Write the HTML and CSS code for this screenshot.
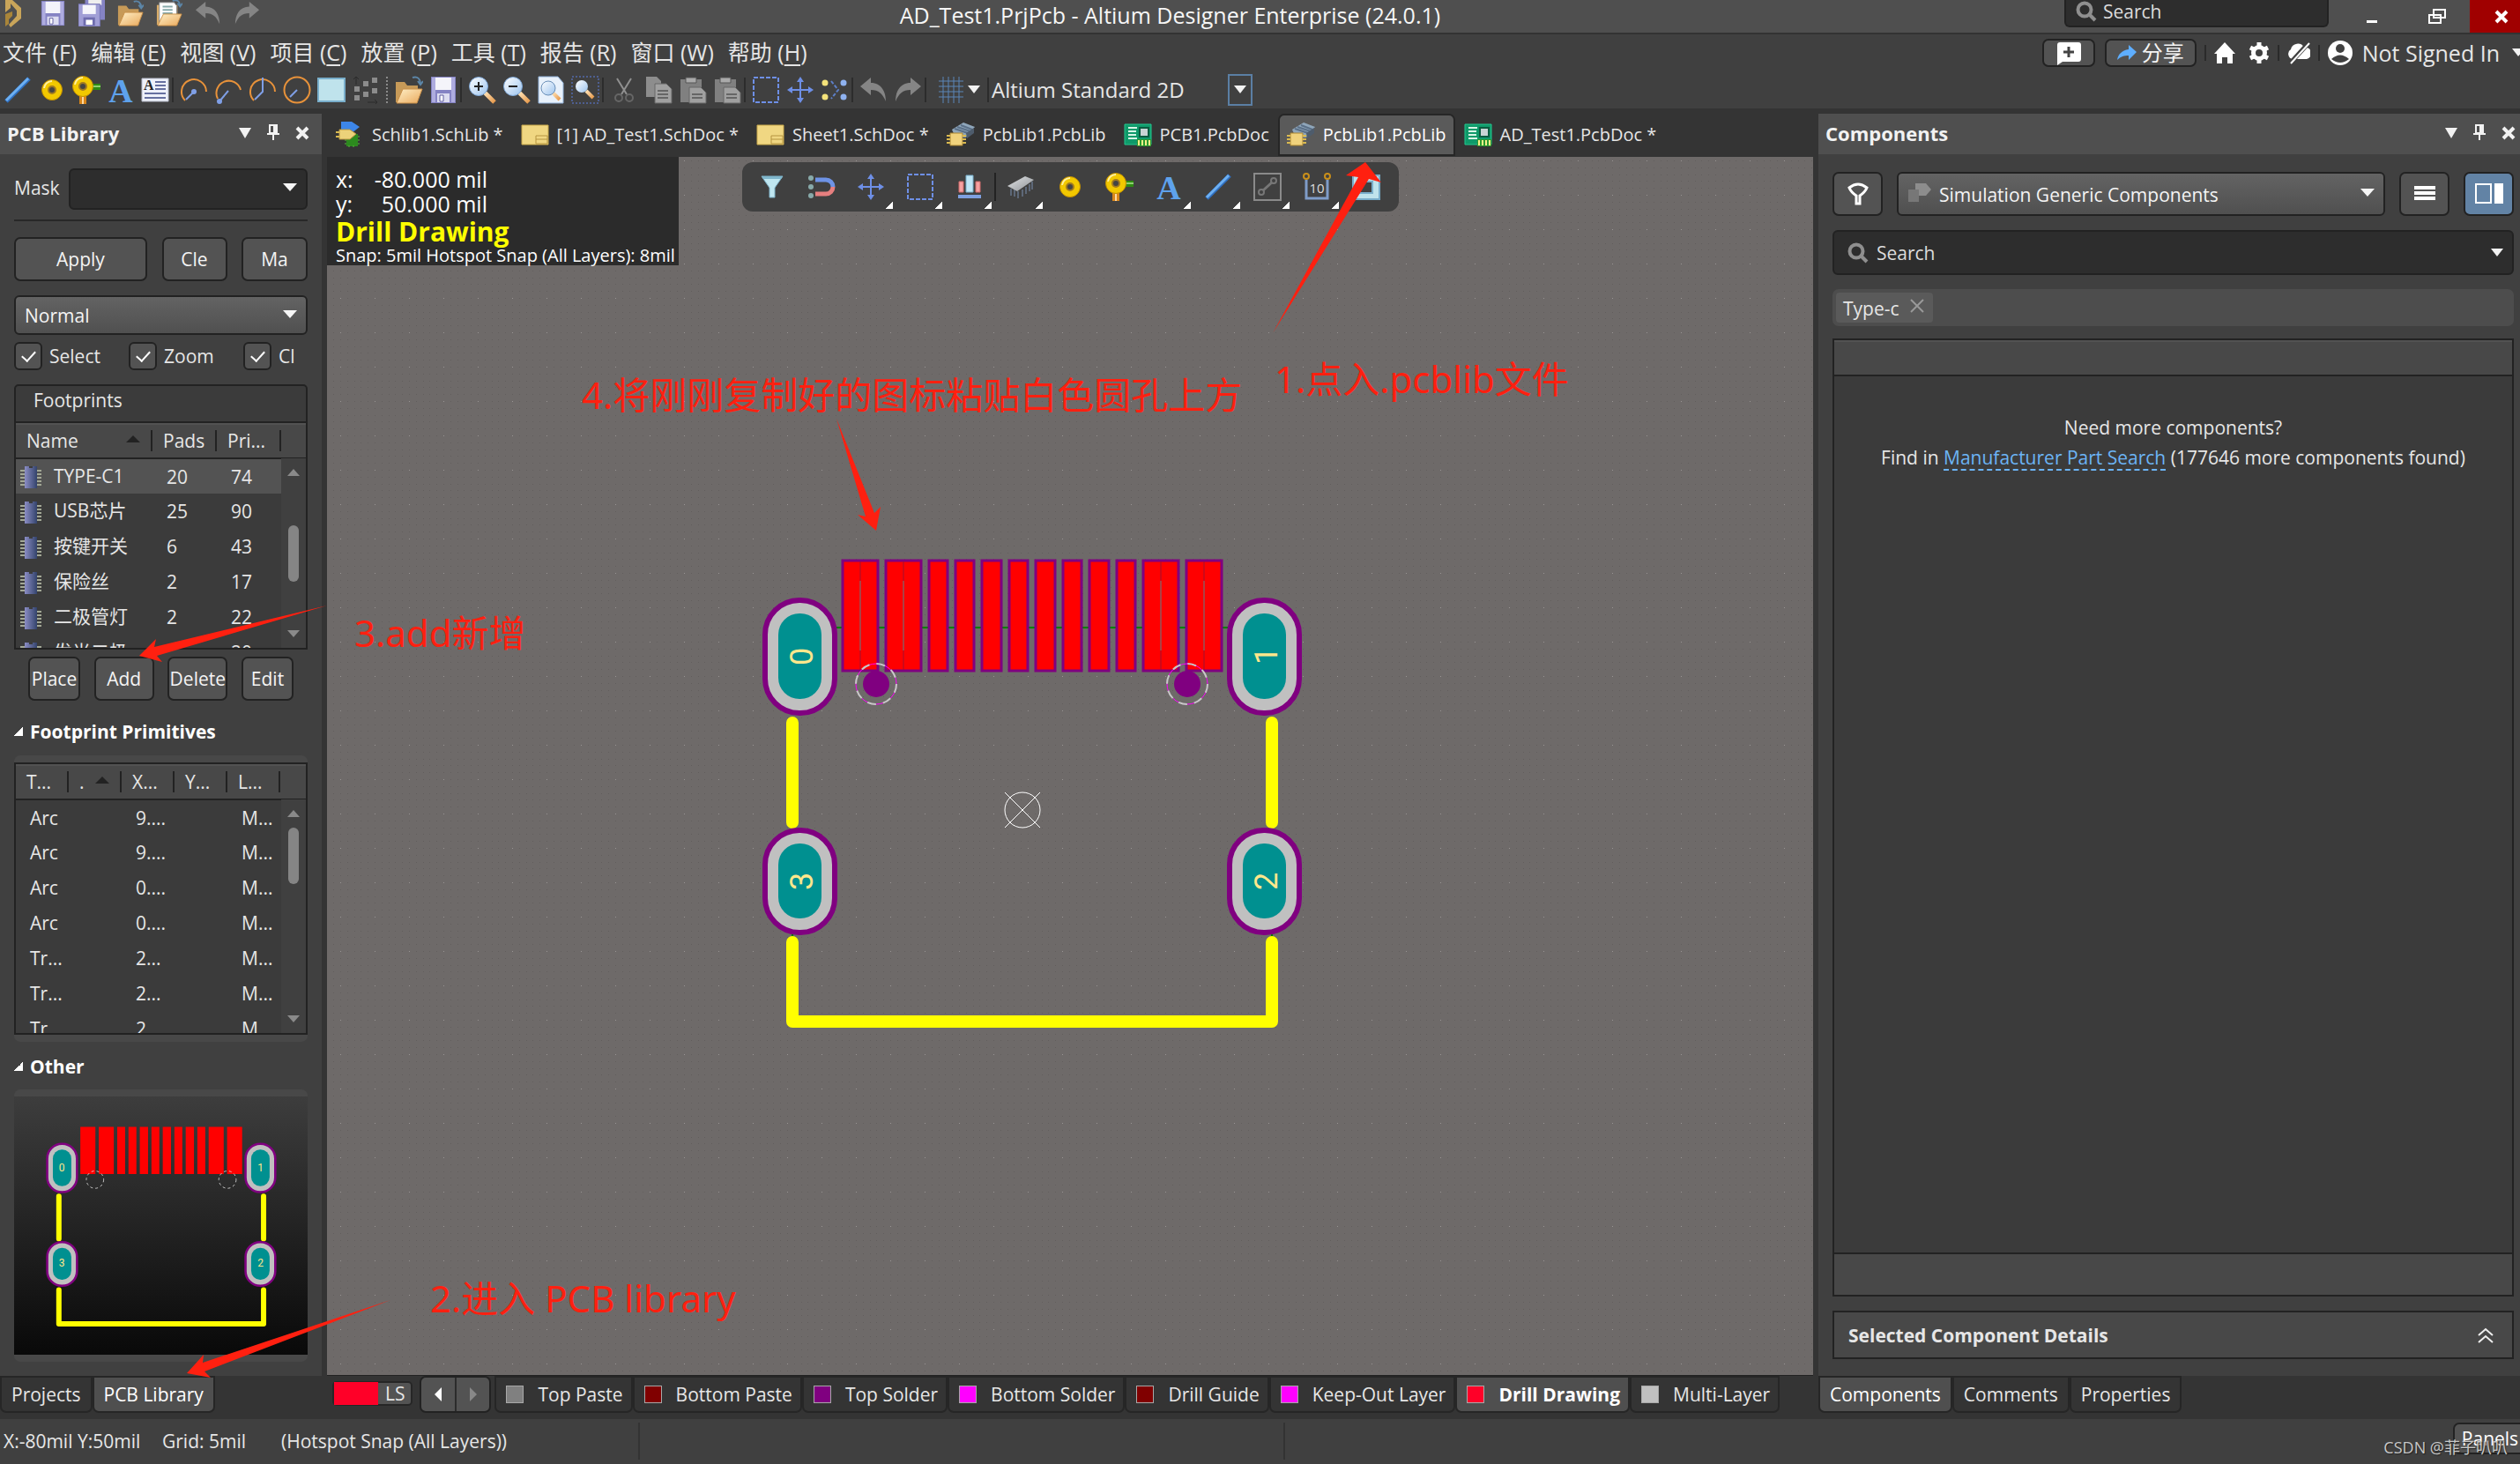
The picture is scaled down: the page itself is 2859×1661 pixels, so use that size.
FILE: index.html
```html
<!DOCTYPE html>
<html lang="zh-CN">
<head>
<meta charset="utf-8">
<title>AD_Test1.PrjPcb - Altium Designer Enterprise (24.0.1)</title>
<link rel="stylesheet" href="styles.css">
</head>
<body>
<svg class="defs" aria-hidden="true">
  <defs>
    <linearGradient id="g-handle" x1="0" y1="0" x2="1" y2="1"><stop offset="0" stop-color="#ffe3b8"/><stop offset="1" stop-color="#e79a4c"/></linearGradient>
    <linearGradient id="g-folder" x1="0" y1="0" x2="1" y2="1"><stop offset="0" stop-color="#fff0c8"/><stop offset="1" stop-color="#e9a95c"/></linearGradient>
    <linearGradient id="g-lens" x1="0" y1="0" x2="1" y2="1"><stop offset="0" stop-color="#fff"/><stop offset="1" stop-color="#9cc4ee"/></linearGradient>
    <linearGradient id="g-chip" x1="0" y1="0" x2="1" y2="0"><stop offset="0" stop-color="#8b8dc4"/><stop offset="1" stop-color="#33436c"/></linearGradient>
    <linearGradient id="g-metal" x1="0" y1="0" x2="1" y2="1"><stop offset="0" stop-color="#e4e6e8"/><stop offset="1" stop-color="#8b8f94"/></linearGradient>
    <linearGradient id="g-preview" x1="0" y1="0" x2="0" y2="1"><stop offset="0" stop-color="#3d3d3d"/><stop offset="1" stop-color="#090909"/></linearGradient>
    <pattern id="dots" width="39" height="39" patternUnits="userSpaceOnUse" patternTransform="translate(386 416)">
      <g fill="#625e5d"><path d="M0 0h1v1H0zM8 0h1v1H8zM16 0h1v1h-1zM23 0h1v1h-1zM31 0h1v1h-1zM0 8h1v1H0zM8 8h1v1H8zM16 8h1v1h-1zM23 8h1v1h-1zM31 8h1v1h-1zM0 16h1v1H0zM8 16h1v1H8zM16 16h1v1h-1zM23 16h1v1h-1zM31 16h1v1h-1zM0 23h1v1H0zM8 23h1v1H8zM16 23h1v1h-1zM23 23h1v1h-1zM31 23h1v1h-1zM0 31h1v1H0zM8 31h1v1H8zM16 31h1v1h-1zM23 31h1v1h-1zM31 31h1v1h-1z"/></g>
      <path d="M0 0h1v1H0z" fill="#989493"/>
    </pattern>

    <symbol id="i-logo" viewBox="0 0 32 32"><path d="M6 0h8l10 9v12L12 31l-2-3 9-10v-6l-7-8v5l-6 5z" fill="#c9a55a"/><path d="M6 16l8-3v5l-4 4v5l-4 3z" fill="#a98539"/></symbol>
    <symbol id="i-save" viewBox="0 0 32 32"><path d="M2 1h28v30H2z" fill="#8583c4"/><path d="M3 2h4v28H3zM25 2h4v28h-4z" fill="#aeacdf"/><path d="M7 2h18v14H7z" fill="#f4f4fa"/><path d="M9 20h14v10H9z" fill="#dcdcf0"/><path d="M12 22h4v7h-4z" fill="#fff" stroke="#5f5da0"/></symbol>
    <symbol id="i-saveall" viewBox="0 0 32 32"><path d="M8-3h24v27H8z" fill="#8583c4"/><path d="M12-3h16v9H12z" fill="#eee"/><path d="M0 5h26v27H0z" fill="#a19fd6" stroke="#7472b4"/><path d="M5 6h16v11H5z" fill="#f6f6fb"/><path d="M6 21h14v10H6z" fill="#6e6cae"/><path d="M9 24h8v6H9z" fill="#fff"/></symbol>
    <symbol id="i-open" viewBox="0 0 32 32"><path d="M1 7h10l3 4h12v19H1z" fill="#c79a58"/><path d="M9 15h22l-6 16H2z" fill="url(#g-folder)" stroke="#c98f48"/><path d="M20 2c6-2 9 2 9 7m-3-3l3 4 3-4" fill="none" stroke="#5c86a8" stroke-width="2"/></symbol>
    <symbol id="i-openprj" viewBox="0 0 32 32"><path d="M1 6h25v24H1z" fill="#d9ac6a"/><path d="M4 3h18l3 4v20H4z" fill="#fff" stroke="#888"/><path d="M8 8h12M8 12h12M8 16h12" stroke="#8aa" stroke-width="2"/><path d="M9 17h22l-6 14H2z" fill="url(#g-folder)" stroke="#c98f48"/><path d="M20 1c7-2 9 2 9 6m-3-3l3 4 3-4" fill="none" stroke="#5c86a8" stroke-width="2"/></symbol>
    <symbol id="i-undo" viewBox="0 0 32 32"><path d="M1 12L13 2v6c12 0 17 10 17 21-4-9-8-13-17-13v6z" fill="#858585"/></symbol>
    <symbol id="i-redo" viewBox="0 0 32 32"><path d="M31 12L19 2v6C7 8 2 18 2 29c4-9 8-13 17-13v6z" fill="#858585"/></symbol>
    <symbol id="i-line" viewBox="0 0 32 32"><path d="M3 29L29 3" stroke="#2f6fc0" stroke-width="5"/><path d="M3 28L28 3" stroke="#6db0f2" stroke-width="3"/></symbol>
    <symbol id="i-pad" viewBox="0 0 32 32"><circle cx="16" cy="16" r="11.500" fill="#f2c800" stroke="#c28f00"/><path d="M7 14a9 9 0 0 1 9-8" fill="none" stroke="#fff0a0" stroke-width="2"/><circle cx="16" cy="16" r="4" fill="#444" stroke="#a07a20" stroke-width="2"/></symbol>
    <symbol id="i-via" viewBox="0 0 32 32"><path d="M20 9h12v7H20z" fill="#2f8a14"/><path d="M20 11h12v2H20z" fill="#8ed070"/><path d="M8 18h8v14H8z" fill="#d9861a"/><path d="M11 18h2v14h-2z" fill="#ffd9a0"/><circle cx="12" cy="12" r="11.500" fill="#f2c800" stroke="#c28f00"/><path d="M3 10a9 9 0 0 1 9-8" fill="none" stroke="#fff0a0" stroke-width="2"/><circle cx="12" cy="12" r="4" fill="#444" stroke="#a07a20" stroke-width="2"/></symbol>
    <symbol id="i-text" viewBox="0 0 32 32"><text x="16" y="30" text-anchor="middle" class="glyph-a">A</text></symbol>
    <symbol id="i-frame" viewBox="0 0 32 32"><path d="M1 3h30v26H1z" fill="#eef1fa" stroke="#b8bccb"/><text x="3" y="16" class="glyph-a-small">A</text><path d="M16 7h12M16 11h12M16 15h12M4 20h24M4 25h24" stroke="#6670a0" stroke-width="2"/></symbol>
    <symbol id="i-arc1" viewBox="0 0 32 32"><path d="M6 28A14 14 0 1 1 30 18" fill="none" stroke="#e8923a" stroke-width="2"/><path d="M7 27L16 18" stroke="#7f9fe6" stroke-width="2"/><circle cx="16" cy="18" r="3" fill="#7f9fe6"/></symbol>
    <symbol id="i-arc2" viewBox="0 0 32 32"><path d="M4 26A14 14 0 1 1 30 16" fill="none" stroke="#e8923a" stroke-width="2"/><path d="M6 29L16 17" stroke="#7f9fe6" stroke-width="2"/><circle cx="6" cy="29" r="3" fill="#7f9fe6"/></symbol>
    <symbol id="i-arc3" viewBox="0 0 32 32"><path d="M6 28A14 14 0 1 1 30 18" fill="none" stroke="#e8923a" stroke-width="2"/><path d="M7 27L16 18V2" fill="none" stroke="#7f9fe6" stroke-width="2"/></symbol>
    <symbol id="i-circle" viewBox="0 0 32 32"><circle cx="16" cy="16" r="14.500" fill="none" stroke="#e8923a" stroke-width="2"/><path d="M8 24L16 16" stroke="#7f9fe6" stroke-width="2"/></symbol>
    <symbol id="i-fill" viewBox="0 0 32 32"><path d="M1 3h30v26H1z" fill="#bfe3ec" stroke="#79aecb" stroke-width="2"/></symbol>
    <symbol id="i-array" viewBox="0 0 32 32"><path d="M3 28h6v-6H3zM3 18h6v-6H3zM13 24h6v-6h-6zM13 12h6V6h-6zM23 20h6v-6h-6zM23 8h6V2h-6z" fill="#8c8c8c"/><path d="M5 10V1M2 4l3-3 3 3M18 30h11m-3-3l3 3-3 3" stroke="#2a2a2a" fill="none"/></symbol>
    <symbol id="i-zoomin" viewBox="0 0 32 32"><path d="M19 19l11 11" stroke="url(#g-handle)" stroke-width="5"/><circle cx="12" cy="12" r="10.500" fill="url(#g-lens)" stroke="#7fa8d8"/><path d="M7 12h10M12 7v10" stroke="#222" stroke-width="2"/></symbol>
    <symbol id="i-zoomout" viewBox="0 0 32 32"><path d="M19 19l11 11" stroke="url(#g-handle)" stroke-width="5"/><circle cx="12" cy="12" r="10.500" fill="url(#g-lens)" stroke="#7fa8d8"/><path d="M7 12h10" stroke="#222" stroke-width="2"/></symbol>
    <symbol id="i-zoomdoc" viewBox="0 0 32 32"><path d="M2 1h22l6 7v23H2z" fill="#e8f1fb" stroke="#8fb0d8"/><path d="M18 19l8 8" stroke="url(#g-handle)" stroke-width="4"/><circle cx="13" cy="14" r="8" fill="url(#g-lens)" stroke="#6a8fb8"/></symbol>
    <symbol id="i-zoomsel" viewBox="0 0 32 32"><path d="M1 1h30v30H1z" fill="none" stroke="#5d7fe0" stroke-width="1" stroke-dasharray="2 2"/><path d="M17 17l8 8" stroke="url(#g-handle)" stroke-width="4"/><circle cx="12" cy="12" r="7" fill="url(#g-lens)"/></symbol>
    <symbol id="i-cut" viewBox="0 0 32 32"><path d="M8 3l11 18M24 3L13 21" stroke="#909090" stroke-width="2"/><g fill="none" stroke="#666" stroke-width="2"><circle cx="10" cy="25" r="4"/><circle cx="22" cy="25" r="4"/></g></symbol>
    <symbol id="i-copy" viewBox="0 0 32 32"><path d="M2 1h12l5 5v18H2z" fill="#8d8d8d"/><path d="M12 9h13l6 6v16H12z" fill="#a0a0a0" stroke="#666"/><path d="M15 17h12M15 21h12M15 25h12" stroke="#666" stroke-width="2"/></symbol>
    <symbol id="i-paste" viewBox="0 0 32 32"><path d="M2 4h24v26H2z" fill="#808080"/><path d="M8 2h12v6H8z" fill="#aaa" stroke="#555"/><path d="M12 13h13l6 6v12H12z" fill="#a0a0a0" stroke="#666"/><path d="M15 21h12M15 25h12" stroke="#666" stroke-width="2"/></symbol>
    <symbol id="i-select" viewBox="0 0 32 32"><path d="M2 2h28v28H2z" fill="none" stroke="#6e8fe6" stroke-width="2" stroke-dasharray="5 2"/></symbol>
    <symbol id="i-move" viewBox="0 0 32 32"><path d="M16 3v26M3 16h26" stroke="#6e8fe6" stroke-width="2"/><path d="M16 1l4 6h-8zM16 31l4-6h-8zM1 16l6-4v8zM31 16l-6-4v8z" fill="#6e8fe6"/></symbol>
    <symbol id="i-clear" viewBox="0 0 32 32"><g fill="#f4e27a"><circle cx="5" cy="8" r="3.500"/><circle cx="5" cy="24" r="3.500"/></g><circle cx="26" cy="8" r="3.500" fill="#8fb2f0"/><circle cx="26" cy="24" r="3.500" fill="#8fb2f0"/><path d="M12 6l8 10-8 10" fill="none" stroke="#5d7fc8" stroke-width="2" stroke-dasharray="4 2"/></symbol>
    <symbol id="i-grid" viewBox="0 0 32 32"><path d="M7 1v30M13 1v30M19 1v30M25 1v30M2 6h28M2 12h28M2 18h28M2 24h28" stroke="#5b86b8" stroke-width="1"/></symbol>
    <symbol id="i-filter" viewBox="0 0 32 32"><path d="M4 4h24L19 17v11h-6V17z" fill="#bfe6f0" stroke="#7fb2c8"/><path d="M4 4h24l-2 3H6z" fill="#7fb6cc"/></symbol>
    <symbol id="i-snap" viewBox="0 0 32 32"><circle cx="4" cy="6" r="3" fill="#8aa"/><circle cx="4" cy="16" r="3" fill="#8aa"/><circle cx="4" cy="26" r="3" fill="#8aa"/><path d="M9 8h12a8 8 0 0 1 8 8" fill="none" stroke="#6e93e6" stroke-width="5"/><path d="M29 16a8 8 0 0 1-8 8H9" fill="none" stroke="#e67f7f" stroke-width="5"/></symbol>
    <symbol id="i-align" viewBox="0 0 32 32"><path d="M4 10h5v12H4zM23 10h5v12h-5z" fill="#f4a0a0" stroke="#d06a6a"/><path d="M12 3h8v19h-8z" fill="#bfe6f6" stroke="#79aecb"/><path d="M3 25h26v4H3z" fill="#7fa0e0"/></symbol>
    <symbol id="i-comp" viewBox="0 0 32 32"><path d="M5 18v8M9 19v8M13 21v8M18 19v8M22 16v8M26 13v8M29 10v9" stroke="#5d6878" stroke-width="2"/><path d="M1 15L21 4l10 4-19 13z" fill="url(#g-metal)"/></symbol>
    <symbol id="i-conn" viewBox="0 0 32 32"><path d="M1 1h30v30H1z" fill="none" stroke="#8a8a8a" stroke-width="2"/><path d="M11 20l10-9" stroke="#777" stroke-width="3"/><g fill="none" stroke="#777" stroke-width="2"><circle cx="9" cy="22" r="3"/><circle cx="23" cy="9" r="3"/></g></symbol>
    <symbol id="i-dim" viewBox="0 0 32 32"><path d="M4 8v21h24V8" fill="none" stroke="#7f9cc8" stroke-width="3"/><circle cx="4" cy="4" r="3" fill="none" stroke="#c98f1a" stroke-width="2"/><circle cx="28" cy="4" r="3" fill="none" stroke="#c98f1a" stroke-width="2"/><text x="16" y="23" text-anchor="middle" class="glyph-ten">10</text></symbol>
    <symbol id="i-region" viewBox="0 0 32 32"><path d="M1 3h30v27H1z" fill="#bfe3ec" stroke="#79aecb" stroke-width="2"/><path d="M9 10h14v13H9z" fill="#404040" stroke="#79aecb" stroke-width="2"/></symbol>

    <symbol id="i-schlib" viewBox="0 0 32 32"><path d="M6 1h12l9 6-9 7H6z" fill="#3d86e8"/><path d="M12 15h13v14H12z" fill="#2c8a1e"/><path d="M10 18h17M10 22h17M10 26h17M15 13v18M20 13v18" stroke="#59b83c" stroke-dasharray="2 13"/><path d="M4 10h12l7 5-7 6H4z" fill="#ecd27a" stroke="#b59440"/><path d="M0 13h4M0 18h4" stroke="#d9b950" stroke-width="2"/></symbol>
    <symbol id="i-schdoc" viewBox="0 0 32 32"><path d="M1 5h30v22H1z" fill="#f0d782" stroke="#c9a94a"/><path d="M17 17h13v9H17zM17 21h13" fill="none" stroke="#b59440"/></symbol>
    <symbol id="i-pcblib" viewBox="0 0 32 32"><path d="M6 10l13-8 13 5-10 12H10z" fill="#8fa6ba"/><path d="M9 9l15 5M12 7l15 5M16 5l13 5" stroke="#5b7088" stroke-width="2"/><path d="M22 14l9-6v6l-8 6z" fill="#4e5c6c"/><path d="M4 14h14v14H4z" fill="#f0d27c" stroke="#a88430"/><path d="M0 17h4M0 21h4M0 25h4M18 17h4M18 21h4M18 25h4" stroke="#d9b950" stroke-width="2"/></symbol>
    <symbol id="i-pcbdoc" viewBox="0 0 32 32"><path d="M1 4h30v23H1z" fill="#0f9a6a" stroke="#22c890"/><path d="M5 8h10M5 12h9M5 16h9M5 20h10" stroke="#d6f5e6" stroke-width="2"/><path d="M18 8h10v10H18z" fill="#c8d4d4" stroke="#0b5c40" stroke-width="2"/><path d="M15 21h16v8H15z" fill="#2a9a30"/><path d="M17 22v6M21 22v6M25 22v6M29 22v6" stroke="#f6f08a" stroke-width="2"/></symbol>
    <symbol id="i-ic" viewBox="0 0 24 28"><path d="M0 6h24M0 10h24M0 14h24M0 18h24M0 22h24" stroke="#a3a896" stroke-width="2"/><path d="M5 1h14v25H5z" fill="url(#g-chip)"/><path d="M10 1h4v2h-4z" fill="#3c3c3c"/></symbol>

    <symbol id="i-pin" viewBox="0 0 16 20"><path d="M4 1h8v9H4z" fill="none" stroke="#f2f2f2" stroke-width="2"/><path d="M8 1h4v9H8zM1 10h14v2H1zM7 12h2v6H7z" fill="#f2f2f2"/></symbol>
    <symbol id="i-x" viewBox="0 0 16 16"><path d="M2 2l12 12M14 2L2 14" stroke="currentColor" stroke-width="4"/></symbol>
    <symbol id="i-search" viewBox="0 0 24 24"><circle cx="10" cy="10" r="7.500" fill="none" stroke="#8f8f8f" stroke-width="4"/><path d="M15 15l7 7" stroke="#8f8f8f" stroke-width="4"/></symbol>

    <path id="lands" d="M956 636h40v125h-40zM1005 636h40v125h-40zM1054 636h21v125h-21zM1084 636h21v125h-21zM1114 636h22v125h-22zM1145 636h21v125h-21zM1175 636h22v125h-22zM1206 636h21v125h-21zM1236 636h22v125h-22zM1267 636h21v125h-21zM1297 636h40v125h-40zM1346 636h40v125h-40z"/>
    <g id="outline" fill="none" stroke="#ff0" stroke-width="14" stroke-linecap="round" stroke-linejoin="round"><path d="M899 820v113M1443 820v113M899 1069v90h544v-90"/></g>
    <g id="mounts">
      <g fill="#c0c0c0" stroke="#800080" stroke-width="6"><rect x="868" y="681" width="79" height="128" rx="39"/><rect x="1395" y="681" width="79" height="128" rx="39"/><rect x="868" y="942" width="79" height="116" rx="39"/><rect x="1395" y="942" width="79" height="116" rx="39"/></g>
      <g fill="#009090"><rect x="883" y="696" width="49" height="97" rx="24"/><rect x="1410" y="696" width="49" height="97" rx="24"/><rect x="883" y="957" width="49" height="85" rx="24"/><rect x="1410" y="957" width="49" height="85" rx="24"/></g>
    </g>
  </defs>
</svg>

<div class="app">
  <header class="titlebar">
    <div class="quick">
      <svg class="ic logo"><use href="#i-logo"/></svg>
      <button class="tb" aria-label="Save"><svg class="ic"><use href="#i-save"/></svg></button>
      <button class="tb" aria-label="Save all"><svg class="ic"><use href="#i-saveall"/></svg></button>
      <button class="tb" aria-label="Open"><svg class="ic"><use href="#i-open"/></svg></button>
      <button class="tb" aria-label="Open project"><svg class="ic"><use href="#i-openprj"/></svg></button>
      <button class="tb" aria-label="Undo"><svg class="ic"><use href="#i-undo"/></svg></button>
      <button class="tb" aria-label="Redo"><svg class="ic"><use href="#i-redo"/></svg></button>
    </div>
    <h1 class="apptitle">AD_Test1.PrjPcb - Altium Designer Enterprise (24.0.1)</h1>
    <div class="wincontrols">
      <label class="titlesearch"><svg class="ic24"><use href="#i-search"/></svg><input type="text" placeholder="Search" aria-label="Search"></label>
      <button class="win" aria-label="Minimize"><svg width="20" height="20"><path d="M4 14h12v3H4z" fill="#fff"/></svg></button>
      <button class="win" aria-label="Restore"><svg width="22" height="20"><path d="M7 2h13v9H7zM2 8h13v9H2z" fill="#4f4f4f" stroke="#fff" stroke-width="2"/></svg></button>
      <button class="win close" aria-label="Close"><svg width="16" height="16"><use href="#i-x"/></svg></button>
    </div>
  </header>

  <div class="menurow">
    <nav class="menu">
      <button>文件 (<u>F</u>)</button><button>编辑 (<u>E</u>)</button><button>视图 (<u>V</u>)</button><button>项目 (<u>C</u>)</button><button>放置 (<u>P</u>)</button><button>工具 (<u>T</u>)</button><button>报告 (<u>R</u>)</button><button>窗口 (<u>W</u>)</button><button>帮助 (<u>H</u>)</button>
    </nav>
    <div class="account">
      <button class="btn mini" aria-label="Comment"><svg width="30" height="28"><path d="M5 2h21q3 0 3 3v16q0 3-3 3H8l-6 4V5q0-3 3-3z" fill="#fff"/><path d="M9 13h12M15 7v12" stroke="#444" stroke-width="3"/></svg></button>
      <button class="btn mini share"><svg width="22" height="20"><path d="M22 9L13 1v5C5 7 1 12 0 18c4-4 8-5 13-5v5z" fill="#5eaeff"/></svg>分享</button>
      <i class="vsep"></i>
      <svg width="24" height="24"><path d="M12 0l12 13h-3v11h-6v-7H9v7H3V13H0z" fill="#fff"/></svg>
      <svg class="gear" width="24" height="24" viewBox="0 0 24 24"><circle cx="12" cy="12" r="6.500" fill="none" stroke="#fff" stroke-width="5"/><path d="M12 0v5M12 19v5M2 6l4 2M18 16l4 2M22 6l-4 2M6 16l-4 2" stroke="#fff" stroke-width="5"/></svg>
      <i class="vsep"></i>
      <svg width="26" height="26"><path d="M6 20a6 6 0 0 1-2-11 8 8 0 0 1 15-2 6 6 0 0 1 3 13z" fill="#fff"/><path d="M3 25L24 2" stroke="#404040" stroke-width="5"/><path d="M4 25L25 2" stroke="#fff" stroke-width="2"/></svg>
      <i class="vsep"></i>
      <svg class="user" width="28" height="28"><circle cx="14" cy="14" r="14" fill="#fff"/><circle cx="14" cy="9" r="5" fill="#404040"/><path d="M4 21q10-9 20 0-10 8-20 0z" fill="#404040"/></svg>
      <span class="signin">Not Signed In</span><i class="caret"></i>
    </div>
  </div>

  <div class="toolbar">
    <button class="tool" aria-label="Line"><svg class="ic"><use href="#i-line"/></svg></button>
    <button class="tool" aria-label="Pad"><svg class="ic"><use href="#i-pad"/></svg></button>
    <button class="tool" aria-label="Via"><svg class="ic"><use href="#i-via"/></svg></button>
    <button class="tool" aria-label="String"><svg class="ic"><use href="#i-text"/></svg></button>
    <button class="tool" aria-label="Text frame"><svg class="ic"><use href="#i-frame"/></svg></button>
    <i class="tsep"></i>
    <button class="tool" aria-label="Arc by center"><svg class="ic"><use href="#i-arc1"/></svg></button>
    <button class="tool" aria-label="Arc by edge"><svg class="ic"><use href="#i-arc2"/></svg></button>
    <button class="tool" aria-label="Arc any angle"><svg class="ic"><use href="#i-arc3"/></svg></button>
    <button class="tool" aria-label="Full circle"><svg class="ic"><use href="#i-circle"/></svg></button>
    <button class="tool" aria-label="Fill"><svg class="ic"><use href="#i-fill"/></svg></button>
    <button class="tool" aria-label="Paste array"><svg class="ic"><use href="#i-array"/></svg></button>
    <i class="tsep grip"></i>
    <button class="tool" aria-label="Open"><svg class="ic"><use href="#i-open"/></svg></button>
    <button class="tool" aria-label="Save"><svg class="ic"><use href="#i-save"/></svg></button>
    <i class="tsep"></i>
    <button class="tool" aria-label="Zoom in"><svg class="ic"><use href="#i-zoomin"/></svg></button>
    <button class="tool" aria-label="Zoom out"><svg class="ic"><use href="#i-zoomout"/></svg></button>
    <button class="tool" aria-label="Fit document"><svg class="ic"><use href="#i-zoomdoc"/></svg></button>
    <button class="tool" aria-label="Zoom area"><svg class="ic"><use href="#i-zoomsel"/></svg></button>
    <i class="tsep"></i>
    <button class="tool" aria-label="Cut"><svg class="ic"><use href="#i-cut"/></svg></button>
    <button class="tool" aria-label="Copy"><svg class="ic"><use href="#i-copy"/></svg></button>
    <button class="tool" aria-label="Paste"><svg class="ic"><use href="#i-paste"/></svg></button>
    <button class="tool" aria-label="Paste special"><svg class="ic"><use href="#i-paste"/></svg></button>
    <i class="tsep"></i>
    <button class="tool" aria-label="Select area"><svg class="ic"><use href="#i-select"/></svg></button>
    <button class="tool" aria-label="Move"><svg class="ic"><use href="#i-move"/></svg></button>
    <button class="tool" aria-label="Clear"><svg class="ic"><use href="#i-clear"/></svg></button>
    <i class="tsep"></i>
    <button class="tool" aria-label="Undo"><svg class="ic"><use href="#i-undo"/></svg></button>
    <button class="tool" aria-label="Redo"><svg class="ic"><use href="#i-redo"/></svg></button>
    <i class="tsep"></i>
    <button class="tool wide" aria-label="Grid"><svg class="ic"><use href="#i-grid"/></svg><i class="caret"></i></button>
    <i class="tsep"></i>
    <span class="viewname">Altium Standard 2D</span>
    <button class="drop" aria-label="View configuration"><i class="caret"></i></button>
  </div>

  <main class="work">
    <section class="side left">
      <header class="panelhead"><h2>PCB Library</h2><i class="caret tall"></i><svg width="16" height="20"><use href="#i-pin"/></svg><svg width="16" height="16"><use href="#i-x"/></svg></header>
      <div class="leftbody">
        <div class="maskrow"><label for="mask">Mask</label><span class="sel dark"><select id="mask"><option></option></select></span></div>
        <hr>
        <div class="trio"><button class="btn">Apply</button><button class="btn">Cle</button><button class="btn">Ma</button></div>
        <span class="sel"><select aria-label="Mode"><option>Normal</option></select></span>
        <div class="checks"><label><input type="checkbox" checked>Select</label><label><input type="checkbox" checked>Zoom</label><label><input type="checkbox" checked>Cl</label></div>
        <div class="listbox footprints">
          <div class="listtitle">Footprints</div>
          <div class="listview">
          <table>
            <colgroup><col class="c-name"><col class="c-num"><col class="c-num"><col></colgroup>
            <thead><tr><th>Name<i class="sort"></i></th><th>Pads</th><th>Pri...</th><th></th></tr></thead>
            <tbody>
              <tr class="on"><td><svg class="chip"><use href="#i-ic"/></svg>TYPE-C1</td><td>20</td><td>74</td><td></td></tr>
              <tr><td><svg class="chip"><use href="#i-ic"/></svg>USB芯片</td><td>25</td><td>90</td><td></td></tr>
              <tr><td><svg class="chip"><use href="#i-ic"/></svg>按键开关</td><td>6</td><td>43</td><td></td></tr>
              <tr><td><svg class="chip"><use href="#i-ic"/></svg>保险丝</td><td>2</td><td>17</td><td></td></tr>
              <tr><td><svg class="chip"><use href="#i-ic"/></svg>二极管灯</td><td>2</td><td>22</td><td></td></tr>
              <tr><td><svg class="chip"><use href="#i-ic"/></svg>发光二极</td><td></td><td>20</td><td></td></tr>
            </tbody>
          </table>
          <div class="scroll mid"><i class="up"></i><i class="thumb"></i><i class="down"></i></div>
          </div>
        </div>
        <div class="actions"><button class="btn">Place</button><button class="btn">Add</button><button class="btn">Delete</button><button class="btn">Edit</button></div>
        <h3><i class="tri"></i>Footprint Primitives</h3>
        <div class="frame">
          <div class="listbox prims">
            <div class="listview">
            <table>
              <colgroup><col class="c-p"><col class="c-p"><col class="c-p"><col class="c-p"><col class="c-p"><col></colgroup>
              <thead><tr><th>T...</th><th>.<i class="sort"></i></th><th>X...</th><th>Y...</th><th>L...</th><th></th></tr></thead>
              <tbody>
                <tr><td>Arc</td><td></td><td>9....</td><td></td><td>M...</td><td></td></tr>
                <tr><td>Arc</td><td></td><td>9....</td><td></td><td>M...</td><td></td></tr>
                <tr><td>Arc</td><td></td><td>0....</td><td></td><td>M...</td><td></td></tr>
                <tr><td>Arc</td><td></td><td>0....</td><td></td><td>M...</td><td></td></tr>
                <tr><td>Tr...</td><td></td><td>2...</td><td></td><td>M...</td><td></td></tr>
                <tr><td>Tr...</td><td></td><td>2...</td><td></td><td>M...</td><td></td></tr>
                <tr><td>Tr...</td><td></td><td>2...</td><td></td><td>M...</td><td></td></tr>
              </tbody>
            </table>
            <div class="scroll"><i class="up"></i><i class="thumb"></i><i class="down"></i></div>
            </div>
          </div>
        </div>
        <h3 class="other"><i class="tri"></i>Other</h3>
        <div class="frame preview">
          <svg viewBox="780 555 780 686" preserveAspectRatio="none">
            <rect x="780" y="555" width="780" height="686" fill="url(#g-preview)"/>
            <use href="#lands" fill="#f00"/>
            <use href="#outline"/><use href="#mounts"/>
            <g fill="none" stroke="#ddd" stroke-width="2" stroke-dasharray="7 7"><circle cx="995" cy="776" r="23"/><circle cx="1347" cy="776" r="23"/></g>
            <g class="padnum small"><text x="907" y="754">0</text><text x="1435" y="754">1</text><text x="1435" y="1008">2</text><text x="907" y="1008">3</text></g>
          </svg>
        </div>
      </div>
      <nav class="ptabs"><button>Projects</button><button class="on">PCB Library</button></nav>
    </section>

    <section class="center">
      <nav class="doctabs">
        <button><svg class="ic"><use href="#i-schlib"/></svg>Schlib1.SchLib *</button>
        <button><svg class="ic"><use href="#i-schdoc"/></svg>[1] AD_Test1.SchDoc *</button>
        <button><svg class="ic"><use href="#i-schdoc"/></svg>Sheet1.SchDoc *</button>
        <button><svg class="ic"><use href="#i-pcblib"/></svg>PcbLib1.PcbLib</button>
        <button><svg class="ic"><use href="#i-pcbdoc"/></svg>PCB1.PcbDoc</button>
        <button class="on"><svg class="ic"><use href="#i-pcblib"/></svg>PcbLib1.PcbLib</button>
        <button><svg class="ic"><use href="#i-pcbdoc"/></svg>AD_Test1.PcbDoc *</button>
      </nav>
      <div class="canvas">
        <svg class="board" viewBox="371 178 1686 1382">
          <rect x="371" y="178" width="1686" height="1382" fill="url(#dots)" shape-rendering="crispEdges"/>
          <path d="M945 712h450M899 679v40M899 1055v15M1443 1055v15" stroke="#008000" stroke-width="2"/>
          <use href="#lands" fill="#f00" stroke="#800080" stroke-width="3"/>
          <path d="M976 637v123M1025 637v123M1317 637v123M1366 637v123" stroke="#a01030" stroke-width="1"/>
          <path d="M976 659v79M1025 659v79M1317 659v79M1366 659v79" stroke="#8a7a70" stroke-width="1"/>
          <use href="#outline"/><use href="#mounts"/>
          <g fill="#800080"><circle cx="994" cy="776" r="15"/><circle cx="1347" cy="776" r="15"/></g>
          <g fill="none" stroke="#f0f"><circle cx="994" cy="776" r="23"/><circle cx="1347" cy="776" r="23"/></g>
          <g fill="none" stroke="#c8c8c8" stroke-width="2" stroke-dasharray="10 8"><circle cx="994" cy="776" r="23"/><circle cx="1347" cy="776" r="23"/></g>
          <g fill="none" stroke="#fff"><circle cx="1160" cy="919" r="20"/><path d="M1140 899l40 40M1180 899l-40 40"/></g>
          <g class="padnum"><text transform="translate(922 745) rotate(-90)">0</text><text transform="translate(1449 744) rotate(-90)">1</text><text transform="translate(1449 1000) rotate(-90)">2</text><text transform="translate(922 1000) rotate(-90)">3</text></g>
        </svg>
        <div class="hud">
          <p class="pos"><span>x:</span><span>-80.000 mil</span></p>
          <p class="pos"><span>y:</span><span>50.000 mil</span></p>
          <p class="layer">Drill Drawing</p>
          <p class="snap">Snap: 5mil Hotspot Snap (All Layers): 8mil</p>
        </div>
        <div class="activebar">
          <button aria-label="Filter"><svg class="ic"><use href="#i-filter"/></svg></button>
          <button aria-label="Snapping"><svg class="ic"><use href="#i-snap"/></svg></button>
          <button class="more" aria-label="Move"><svg class="ic"><use href="#i-move"/></svg></button>
          <button class="more" aria-label="Select"><svg class="ic"><use href="#i-select"/></svg></button>
          <button class="more" aria-label="Align"><svg class="ic"><use href="#i-align"/></svg></button>
          <i></i>
          <button class="more" aria-label="3D body"><svg class="ic"><use href="#i-comp"/></svg></button>
          <button aria-label="Pad"><svg class="ic"><use href="#i-pad"/></svg></button>
          <button aria-label="Via"><svg class="ic"><use href="#i-via"/></svg></button>
          <button class="more" aria-label="String"><svg class="ic"><use href="#i-text"/></svg></button>
          <button class="more" aria-label="Line"><svg class="ic"><use href="#i-line"/></svg></button>
          <button class="more" aria-label="Connection"><svg class="ic"><use href="#i-conn"/></svg></button>
          <button class="more" aria-label="Dimension"><svg class="ic"><use href="#i-dim"/></svg></button>
          <button aria-label="Region"><svg class="ic"><use href="#i-region"/></svg></button>
        </div>
      </div>
      <nav class="layers">
        <button class="ls"><i></i>LS</button>
        <span class="nav"><button aria-label="Previous layer"><i class="prev"></i></button><button aria-label="Next layer"><i class="next"></i></button></span>
        <button><i class="sw gray"></i>Top Paste</button>
        <button><i class="sw maroon"></i>Bottom Paste</button>
        <button><i class="sw purple"></i>Top Solder</button>
        <button><i class="sw magenta"></i>Bottom Solder</button>
        <button><i class="sw maroon"></i>Drill Guide</button>
        <button><i class="sw magenta"></i>Keep-Out Layer</button>
        <button class="on"><i class="sw red"></i>Drill Drawing</button>
        <button><i class="sw silver"></i>Multi-Layer</button>
      </nav>
    </section>

    <section class="side right">
      <header class="panelhead"><h2>Components</h2><i class="caret tall"></i><svg width="16" height="20"><use href="#i-pin"/></svg><svg width="16" height="16"><use href="#i-x"/></svg></header>
      <div class="rightbody">
        <div class="source">
          <button class="btn sq" aria-label="Filter"><svg width="28" height="26"><path d="M4 6q10-8 20 0-2 5-8 9v9h-4v-9Q6 11 4 6z" fill="none" stroke="#fff" stroke-width="3"/></svg></button>
          <span class="sel lib"><svg width="28" height="26"><path d="M9 1h12l6 7-6 7H9z" fill="#8d8d8d"/><path d="M1 8h12v14H1z" fill="#777"/></svg><select aria-label="Library"><option>Simulation Generic Components</option></select></span>
          <button class="btn sq" aria-label="Menu"><svg width="24" height="18"><path d="M0 0h24v4H0zM0 6h24v4H0zM0 12h24v4H0z" fill="#fff"/></svg></button>
          <button class="btn sq blue" aria-label="Details pane"><svg width="32" height="26"><path d="M1 2h17v21H1z" fill="none" stroke="#fff" stroke-width="2"/><path d="M22 1h10v23H22z" fill="#fff"/></svg></button>
        </div>
        <label class="searchbox"><svg class="ic24"><use href="#i-search"/></svg><input type="text" placeholder="Search" aria-label="Search components"><i class="caret"></i></label>
        <div class="tags"><span class="tag">Type-c<button aria-label="Remove"><svg width="16" height="16"><path d="M1 1l14 14M15 1L1 15" stroke="#999" stroke-width="2"/></svg></button></span></div>
        <div class="results">
          <div class="rhead"></div>
          <div class="rmain"><p>Need more components?</p><p>Find in <a href="#">Manufacturer Part Search</a> (177646 more components found)</p></div>
          <div class="rfoot"></div>
        </div>
        <button class="details">Selected Component Details<svg width="20" height="18"><path d="M2 9l8-7 8 7M2 17l8-7 8 7" fill="none" stroke="#eee" stroke-width="2"/></svg></button>
      </div>
      <nav class="ptabs"><button class="on">Components</button><button>Comments</button><button>Properties</button></nav>
    </section>
  </main>

  <footer class="status"><span class="s1">X:-80mil Y:50mil</span><span class="s2">Grid: 5mil</span><span class="s3">(Hotspot Snap (All Layers))</span><span class="s4"></span><button class="btn panels">Panels</button></footer>

  <svg class="notes" viewBox="0 0 2859 1661">
    <path d="M1549 184l18 23-14-4-109 175 97-177-14-2zM158 744l19-19-2 9 196-47-193 57 6 7zM212 1558l19-21-1 9 213-71-211 81 7 7zM994 602l5-27-7 7-43-107 33 111-9-2z"/>
    <text x="1446" y="446">1.点入.pcblib文件</text>
    <text x="488" y="1489">2.进入 PCB library</text>
    <text x="402" y="734">3.add新增</text>
    <text x="660" y="464">4.将刚刚复制好的图标粘贴白色圆孔上方</text>
  </svg>
  <div class="mark">CSDN @菲子叭叭</div>
</div>
</body>
</html>
```
FILE: styles.css
```css
* { box-sizing: border-box; }
html, body { margin: 0; height: 100%; }
body {
  background: #343434;
  color: #e6e6e6;
  font: 21px/30px "Open Sans", "Noto Sans", "Noto Sans CJK SC", sans-serif;
  overflow: hidden;
}
h1, h2, h3, p { margin: 0; font-weight: 400; }
button, input, select { font: inherit; color: inherit; margin: 0; padding: 0; border: 0; background: none; }
svg { display: block; flex: none; }
i { display: block; flex: none; font-style: normal; }
.defs { position: absolute; width: 0; height: 0; }
.ic { width: 32px; height: 32px; }
.ic24 { width: 24px; height: 24px; }
.glyph-a { font: bold 38px "Liberation Serif", serif; fill: #5ea2ec; }
.glyph-a-small { font: bold 16px "Liberation Serif", serif; fill: #222; }
.glyph-ten { font: 15px "Open Sans", sans-serif; fill: #ddd; }

.app { position: relative; min-height: 100vh; display: grid; grid-template-rows: 39px 41px 43px 1fr 51px; }

.caret { border: 7px solid transparent; border-top: 9px solid #f2f2f2; border-bottom: 0; width: 14px; }
.caret.tall { border-top-width: 12px; }

.btn { background: #535353; border: 2px solid #222; border-radius: 7px; color: #f4f4f4; white-space: nowrap; }

/* title bar */
.titlebar { display: grid; grid-template-columns: 5fr auto 6fr; background: #4f4f4f; border-bottom: 2px solid #333; }
.quick { display: flex; align-items: flex-start; }
.logo { margin-right: 6px; }
.tb { width: 44px; height: 30px; display: flex; justify-content: center; }
.tb .ic { width: 30px; height: 30px; }
.apptitle { font-size: 25px; line-height: 34px; color: #f6f6f6; }
.wincontrols { display: flex; justify-content: flex-end; align-items: flex-start; }
.titlesearch { display: flex; align-items: center; gap: 7px; width: 300px; height: 31px; padding-left: 11px; padding-bottom: 3px; margin-right: 12px; background: #2d2d2d; border: 2px solid #222; border-top: 0; border-radius: 0 0 6px 6px; }
.titlesearch input { width: 200px; height: 26px; }
input::placeholder { color: #dcdcdc; opacity: 1; }
.win { width: 74px; height: 37px; display: flex; align-items: center; justify-content: center; color: #fff; }
.win.close { width: 57px; padding-left: 14px; background: #a00000; }

/* menu */
.menurow { display: flex; justify-content: space-between; background: #404040; }
.menu { display: flex; gap: 16px; padding-left: 3px; padding-bottom: 2px; font-size: 25px; white-space: nowrap; }
.menu u { text-underline-offset: 4px; text-decoration-thickness: 2px; }
.account { display: flex; align-items: center; font-size: 25px; margin-right: -5px; }
.mini { height: 32px; width: 60px; display: flex; align-items: center; justify-content: center; }
.share { width: 104px; margin-left: 11px; gap: 6px; font-size: 24px; }
.vsep { width: 2px; height: 18px; background: #2a2a2a; margin: 0 9px; }
.gear { margin-left: 15px; }
.user { margin-right: 11px; }
.signin { margin-right: 14px; white-space: nowrap; }

/* toolbar */
.toolbar { display: flex; align-items: center; background: #404040; }
.tool { width: 39px; height: 32px; display: flex; align-items: center; justify-content: center; }
.tool.wide { width: 66px; gap: 3px; }
.tsep { width: 5px; height: 28px; border-left: 2px solid #2c2c2c; }
.tsep.grip { width: 10px; height: 30px; border: 0; background: repeating-linear-gradient(#8a8a8a 0 2px, transparent 2px 4px) center / 2px 100% no-repeat; }
.viewname { font-size: 24px; width: 268px; white-space: nowrap; }
.drop { width: 28px; height: 36px; border: 2px solid #5b7fa4; display: flex; align-items: center; justify-content: center; }

/* work area */
.work { display: grid; grid-template-columns: 365px minmax(0, 1fr) 796px; padding-top: 6px; min-height: 0; }
.side { display: grid; grid-template-rows: 46px 1fr 49px; min-width: 0; }
.panelhead { display: flex; align-items: center; background: #4f4f4f; padding: 0 14px 2px 8px; color: #f2f2f2; }
.right .panelhead { padding-right: 5px; }
.panelhead h2 { flex: 1; font-size: 22px; font-weight: 700; }
.panelhead svg { margin-left: 17px; }
.ptabs { display: flex; align-items: flex-start; }
.ptabs button, .layers > button { height: 42px; border: 2px solid #262626; border-radius: 0 0 7px 7px; background: #343434; white-space: nowrap; }
.ptabs button { padding: 0 11px; }
.ptabs .on, .layers > .on { background: #4f4f4f; color: #fff; }

.leftbody { background: #404040; padding: 16px; display: flex; flex-direction: column; min-height: 0; }
.maskrow { display: grid; grid-template-columns: 62px 1fr; align-items: center; }
.maskrow label { padding-bottom: 4px; }
.sel { display: flex; position: relative; align-items: center; background: linear-gradient(#636363, #505050); border: 2px solid #222; border-radius: 6px; height: 45px; }
.sel.dark { background: #2d2d2d; height: 47px; }
.sel select { appearance: none; width: 100%; height: 100%; padding: 0 10px; color: #f4f4f4; }
.sel::after { content: ""; position: absolute; right: 10px; top: 15px; border: 8px solid transparent; border-top: 9px solid #f6f6f6; border-bottom: 0; pointer-events: none; }
hr { width: 100%; height: 2px; margin: 11px 0 18px; border: 0; background: #282828; }
.trio { display: grid; grid-template-columns: 151px 74px 75px; justify-content: space-between; margin-bottom: 16px; }
.trio .btn { height: 50px; }
.checks { display: grid; grid-template-columns: 130px 130px 1fr; margin: 8px 0 16px; }
.checks label { display: flex; align-items: center; gap: 8px; overflow: hidden; }
.checks input { appearance: none; width: 32px; height: 32px; background: #535353; border: 2px solid #222; border-radius: 6px; display: grid; place-items: center; }
.checks input::after { content: ""; width: 7px; height: 13px; margin-bottom: 4px; border: solid #fff; border-width: 0 2px 2px 0; transform: rotate(42deg); }

.listbox { border: 2px solid #222; background: #3b3b3b; display: flex; flex-direction: column; overflow: hidden; flex: none; }
.footprints { height: 301px; border-radius: 5px 5px 0 0; }
.prims { height: 309px; }
.listtitle { height: 42px; padding: 1px 20px; border-bottom: 2px solid #222; }
.listview { position: relative; flex: 1; overflow: hidden; }
table { width: 100%; border-collapse: collapse; table-layout: fixed; }
.c-name { width: 155px; }
.c-num { width: 73px; }
.c-p { width: 60px; }
th { position: relative; height: 39px; padding: 0 0 2px 12px; background: #484848; text-align: left; font-weight: 400; border-top: 2px solid #525252; border-bottom: 2px solid #222; white-space: nowrap; }
th:not(:last-child)::after { content: ""; position: absolute; right: 0; top: 6px; width: 2px; height: 24px; background: #222; }
.sort { position: absolute; right: 14px; top: 12px; border: 8px solid transparent; border-bottom: 8px solid #222; border-top: 0; }
td { height: 40px; padding: 0 0 0 16px; white-space: nowrap; }
.footprints td:first-child { padding-left: 5px; }
.chip { display: inline-block; width: 24px; height: 28px; margin-right: 14px; vertical-align: middle; }
.on td:not(:last-child) { background: #535353; }
.scroll { position: absolute; right: 0; top: 40px; bottom: 0; width: 28px; padding: 12px 0; background: #404040; display: flex; flex-direction: column; align-items: center; }
.up, .down { border: 7px solid transparent; }
.up { border-bottom: 8px solid #8a8a8a; border-top: 0; }
.down { border-top: 8px solid #8a8a8a; border-bottom: 0; margin-top: auto; }
.thumb { width: 12px; height: 64px; border-radius: 6px; background: #858585; margin-top: 12px; }
.mid .thumb { margin-top: 56px; }

.actions { display: flex; justify-content: space-between; padding: 0 16px; margin-top: 8px; }
.actions .btn { height: 50px; width: 59px; }
.actions .btn:nth-child(2), .actions .btn:nth-child(3) { width: 68px; }
h3 { display: flex; align-items: center; gap: 8px; font-size: 21px; font-weight: 700; color: #fff; height: 30px; margin: 20px 0 12px; }
.other { margin: 13px 0 11px; }
.tri { width: 10px; height: 10px; background: linear-gradient(135deg, transparent 50%, #fff 50%); }
.frame { background: #484848; border-radius: 7px; padding: 8px 0; }
.preview { flex: 1; min-height: 0; }
.preview svg { width: 100%; height: 100%; }

/* documents */
.center { display: grid; grid-template-rows: 49px 1fr 50px; padding: 0 6px; min-width: 0; }
.doctabs { display: flex; white-space: nowrap; overflow: hidden; font-size: 20px; }
.doctabs button { display: flex; align-items: center; gap: 9px; padding: 0 8px; height: 48px; border: 2px solid transparent; }
.doctabs .on { background: #5a5a5a; border-color: #262626; border-radius: 7px 7px 0 0; color: #fff; }
.canvas { position: relative; background: #6e6a69; overflow: hidden; }
.board { width: 100%; height: 100%; }
.padnum { font: 36px Roboto, sans-serif; fill: #ffe78c; text-anchor: middle; }
.padnum.small { font-size: 28px; }
.hud { position: absolute; left: 0; top: 0; background: #2b2b2b; width: 399px; height: 123px; padding: 11px 0 0 10px; color: #fff; white-space: nowrap; }
.pos { display: grid; grid-template-columns: 30px 142px; font-size: 25px; line-height: 28px; }
.pos span:last-child { text-align: right; }
.layer { font-size: 30px; line-height: 36px; font-weight: 700; color: #ff0; }
.snap { font-size: 20px; line-height: 17px; }
.activebar { position: absolute; left: 471px; top: 6px; height: 56px; padding: 0 9px 0 6px; display: flex; align-items: center; background: #404040; border-radius: 12px; }
.activebar button { width: 56px; height: 56px; position: relative; display: flex; align-items: center; justify-content: center; }
.activebar > i { width: 2px; height: 32px; background: #222; }
.more::after { content: ""; position: absolute; right: 3px; bottom: 3px; width: 8px; height: 8px; background: linear-gradient(135deg, transparent 50%, #fff 50%); }

.layers { display: flex; align-items: flex-start; border-top: 1px solid #222; white-space: nowrap; overflow: hidden; }
.layers > button { display: flex; align-items: center; padding: 0 9px 0 11px; }
.layers > .on { font-weight: 700; }
.sw { width: 20px; height: 20px; margin-right: 16px; border: 1px solid #a8a8a8; }
.gray { background: #808080; } .maroon { background: #800000; } .purple { background: #800080; } .magenta { background: #f0f; } .red { background: #ff0028; } .silver { background: #c0c0c0; }
.layers > .ls { height: 28px; margin: 6px 8px 0 6px; padding: 0 7px 0 0; border-radius: 5px; background: #535353; gap: 8px; }
.ls i { width: 50px; height: 26px; background: #ff0028; }
.nav { display: flex; width: 81px; height: 42px; margin-right: 4px; background: #535353; border: 2px solid #222; border-radius: 7px; }
.nav button { flex: 1; display: flex; align-items: center; justify-content: center; }
.nav button:first-child { border-right: 2px solid #2c2c2c; }
.prev { border: 8px solid transparent; border-right: 8px solid #fff; border-left: 0; }
.next { border: 8px solid transparent; border-left: 8px solid #888; border-right: 0; }

/* components */
.rightbody { background: #404040; padding: 20px 7px 19px 16px; display: flex; flex-direction: column; }
.source { display: grid; grid-template-columns: 57px 1fr 57px 57px; gap: 16px; }
.sq { height: 50px; display: grid; place-items: center; }
.blue { background: #6283a5; }
.lib { height: 50px; padding-left: 10px; }
.lib select { padding: 2px 8px 0; }
.lib::after { top: 17px; }
.searchbox { display: flex; align-items: center; gap: 9px; height: 51px; margin-top: 16px; padding: 0 10px 0 15px; background: #2d2d2d; border: 2px solid #222; border-radius: 6px; }
.searchbox input { flex: 1; height: 40px; }
.tags { margin-top: 16px; height: 42px; padding: 4px; background: #4d4d4d; border-radius: 7px; display: flex; }
.tag { display: flex; align-items: center; gap: 12px; padding: 2px 10px 0 8px; background: #5a5a5a; border-radius: 4px; }
.tag button { padding-bottom: 6px; }
.results { flex: 1; margin-top: 14px; border: 2px solid #222; display: flex; flex-direction: column; }
.rhead { height: 41px; background: #484848; border-bottom: 2px solid #222; border-top: 2px solid #525252; }
.rmain { flex: 1; background: #3b3b3b; padding-top: 41px; text-align: center; line-height: 34px; }
.rmain a { color: #6cb4f5; text-decoration: underline dashed 2px; text-underline-offset: 5px; }
.rfoot { height: 48px; background: #484848; border-top: 2px solid #222; }
.details { margin-top: 16px; height: 55px; padding: 0 20px 0 16px; display: flex; align-items: center; justify-content: space-between; background: #484848; border: 2px solid #222; font-weight: 700; text-align: left; }

/* status */
.status { display: flex; background: #404040; padding: 4px 0 0 4px; white-space: nowrap; align-items: flex-start; }
.status span { line-height: 42px; height: 42px; }
.s1 { width: 180px; } .s2 { width: 135px; } .s3 { width: 407px; } .s4 { width: 732px; }
.s3, .s4 { border-right: 2px solid #333; }
.panels { height: 36px; width: 84px; margin: 0 -8px 0 auto; color: #fff; }

/* tutorial marks over the window */
.notes { position: absolute; inset: 0; width: 100%; height: 100%; pointer-events: none; fill: #ff2010; font: 42px "Noto Sans", "Noto Sans CJK SC", sans-serif; }
.mark { position: absolute; right: 14px; bottom: 4px; font-size: 18px; color: #c8c8c8; text-shadow: 1px 1px 1px #222; pointer-events: none; }
```
